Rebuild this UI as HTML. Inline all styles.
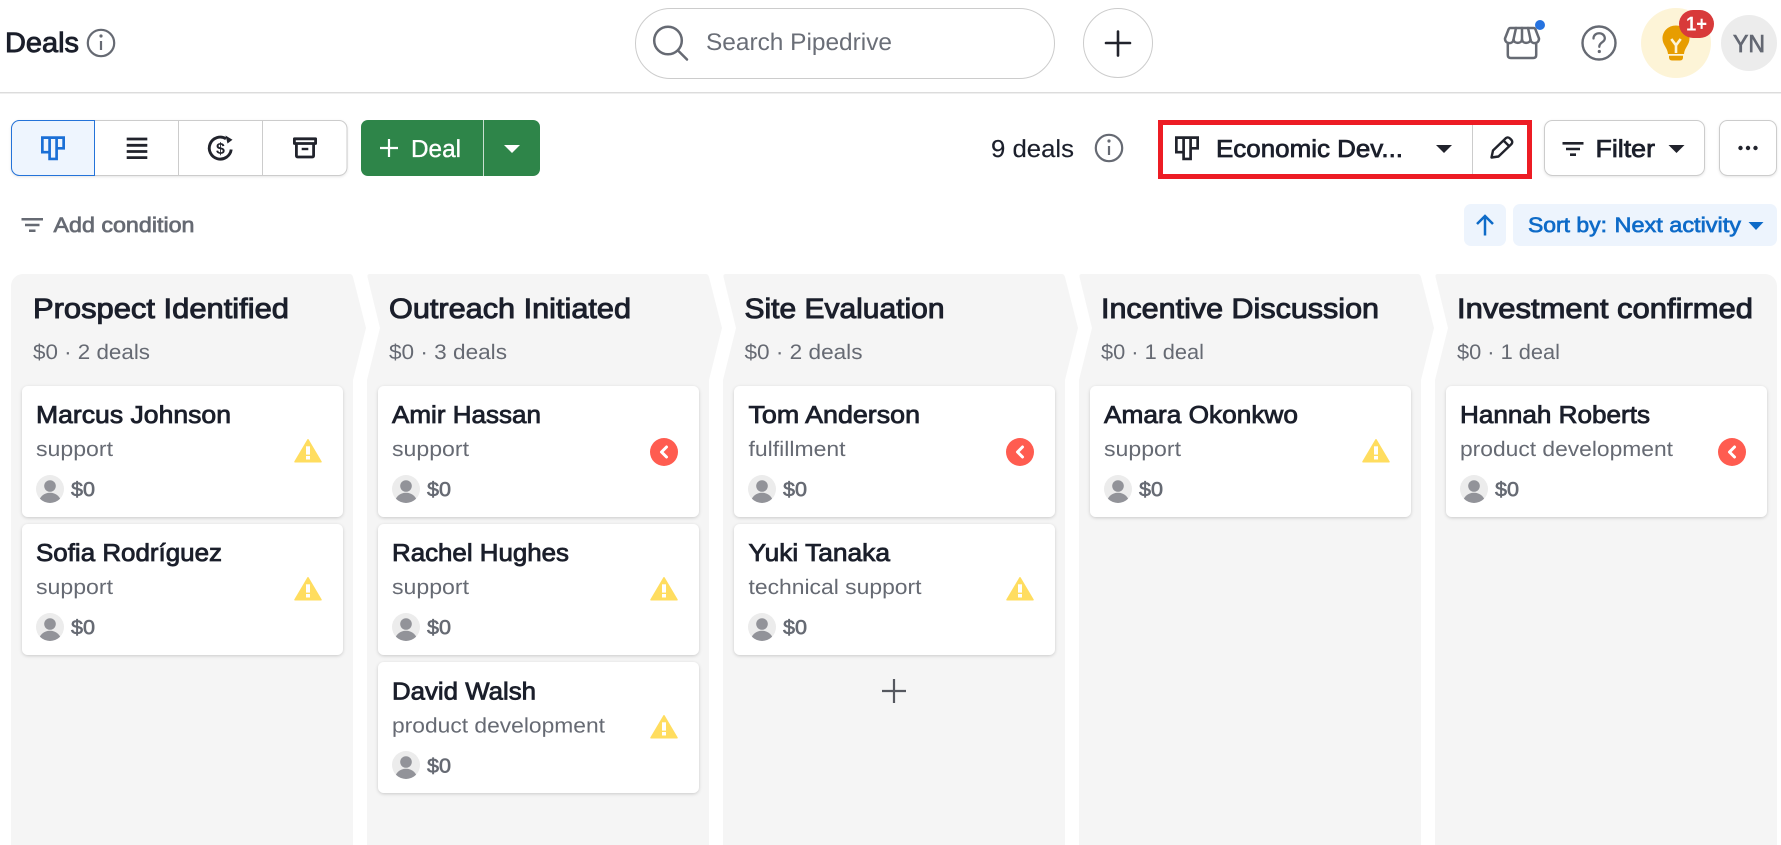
<!DOCTYPE html>
<html lang="en">
<head>
<meta charset="utf-8">
<title>Deals</title>
<style>
html,body{margin:0;padding:0;background:#fff;width:1781px;height:845px;overflow:hidden}
svg{display:block}
text{font-family:"Liberation Sans",Arial,sans-serif;text-rendering:geometricPrecision}
.t{font-size:28px;fill:#1b1f2b;stroke:#1b1f2b;stroke-width:.95px}
.s{font-size:21px;fill:#666a73}
.n{font-size:24.5px;fill:#1b1f2b;stroke:#1b1f2b;stroke-width:.8px}
.v{font-size:20px;fill:#666a73;stroke:#666a73;stroke-width:.6px}
</style>
</head>
<body>
<svg width="1781" height="845" viewBox="0 0 1781 845" xmlns="http://www.w3.org/2000/svg">
<defs>
  <filter id="cs" x="-5%" y="-10%" width="110%" height="125%"><feDropShadow dx="0" dy="1" stdDeviation="1.6" flood-color="#000" flood-opacity=".18"/></filter>
  <filter id="bs" x="-5%" y="-10%" width="110%" height="125%"><feDropShadow dx="0" dy="1" stdDeviation="1.2" flood-color="#000" flood-opacity=".1"/></filter>
  <clipPath id="avc"><circle cx="14" cy="14" r="14"/></clipPath>
  <g id="av"><circle cx="14" cy="14" r="14" fill="#ececec"/><circle cx="14" cy="11" r="5.800" fill="#929399"/><ellipse cx="14" cy="27.500" rx="11" ry="9.800" fill="#929399" clip-path="url(#avc)"/></g>
  <g id="wa"><path d="M14 1.800 27 23.700H1Z" fill="#ffdd5f" stroke="#ffdd5f" stroke-width="1.500" stroke-linejoin="round"/><rect x="12" y="8.300" width="4" height="8.300" fill="#fff"/><rect x="12" y="18" width="4" height="3.500" fill="#fff"/></g>
  <g id="ba"><circle cx="14" cy="14" r="14" fill="#ff5c50"/><path d="M16.500 9 11.500 14 16.500 19" fill="none" stroke="#fff" stroke-width="3" stroke-linecap="round" stroke-linejoin="round"/></g>
  <g id="card">
    <rect width="321" height="131" rx="6" fill="#fff" filter="url(#cs)"/>
    <use href="#av" x="14" y="89"/>
  </g>
  <g id="pl" fill="none" stroke-width="2.700"><path d="M1.350 1.350H22.650V12H15.600V22.650H8.600V15.900H1.350ZM8.600 1.350V15.900M15.600 1.350V12"/></g>
</defs>

<rect width="1781" height="845" fill="#fff"/>

<!-- header -->
<rect y="92" width="1781" height="1" fill="#dcdcdc"/>
<rect y="93" width="1781" height="1" fill="#efefef"/>
<text x="5" y="52" font-size="28" fill="#1b1f2b" stroke="#1b1f2b" stroke-width=".9" textLength="74" lengthAdjust="spacingAndGlyphs">Deals</text>
<g fill="none" stroke="#666a73" stroke-width="2.200"><circle cx="101" cy="43" r="13.200"/><path d="M101 41v9"/></g><circle cx="101" cy="36" r="1.600" fill="#666a73"/>

<rect x="635.500" y="8.500" width="419" height="70" rx="35" fill="#fff" stroke="#ccc"/>
<circle cx="668" cy="40.500" r="13.800" fill="none" stroke="#666a73" stroke-width="2.500"/>
<path d="M678 50.500 687 59.500" stroke="#666a73" stroke-width="2.500" stroke-linecap="round"/>
<text x="706" y="50" font-size="24" fill="#6a6e77" textLength="186" lengthAdjust="spacingAndGlyphs">Search Pipedrive</text>
<circle cx="1118" cy="43" r="34.500" fill="#fff" stroke="#ccc"/>
<path d="M1106 43h24M1118 31.500v24" stroke="#21232c" stroke-width="2.600" stroke-linecap="round"/>

<!-- store -->
<g fill="none" stroke="#666a73" stroke-width="2.500" stroke-linejoin="round" stroke-linecap="round">
  <path d="M1507.800 43V55Q1507.800 58 1510.800 58H1533.200Q1536.200 58 1536.200 55V43"/>
  <path d="M1510.500 28H1533.500Q1535 28 1535.500 29.500L1539 38.500C1539 44.500 1531 44.500 1530.500 39.500C1530 44 1522.500 44 1522 39.500C1521.500 44 1514 44 1513.500 39.500C1513 44.500 1505 44.500 1505 38.500L1508.500 29.500Q1509 28 1510.500 28Z"/>
  <path d="M1513.500 39.500 1516 28M1522 39.500V28M1530.500 39.500 1528 28"/>
</g>
<circle cx="1540" cy="25" r="5" fill="#2673e0"/>
<!-- help -->
<circle cx="1599" cy="43" r="16.500" fill="none" stroke="#666a73" stroke-width="2.400"/>
<path d="M1593.500 38.500C1593.500 31.500 1604.800 31.500 1604.800 38.500C1604.800 42.500 1599.300 42 1599.300 46.800" fill="none" stroke="#666a73" stroke-width="2.300" stroke-linecap="round"/>
<circle cx="1599.300" cy="51.500" r="1.600" fill="#666a73"/>
<!-- bulb -->
<circle cx="1676" cy="43" r="35" fill="#fdf4d7"/>
<path d="M1676 25.500C1684 25.500 1689.500 31.500 1689.500 38.500C1689.500 45 1684.500 47.500 1684 54H1668C1667.500 47.500 1662.500 45 1662.500 38.500C1662.500 31.500 1668 25.500 1676 25.500Z" fill="#e79d00"/>
<path d="M1669 55.800H1683V57.500C1683 59 1682 60.500 1680 60.500H1672C1670 60.500 1669 59 1669 57.500Z" fill="#e79d00"/>
<path d="M1671.300 39 1676 45.300 1680.700 39M1676 45.300V53" fill="none" stroke="#fdf4d7" stroke-width="2.600"/>
<rect x="1679" y="10" width="35" height="28" rx="14" fill="#d83a3a"/>
<text x="1686" y="30.500" font-size="20" font-weight="700" fill="#fff" textLength="21" lengthAdjust="spacingAndGlyphs">1+</text>
<circle cx="1749" cy="43" r="28" fill="#ececec"/>
<text x="1733" y="52" font-size="24.500" fill="#646873" stroke="#646873" stroke-width=".75" textLength="32" lengthAdjust="spacingAndGlyphs">YN</text>

<!-- view toggles -->
<rect x="11.500" y="120.500" width="335.500" height="55" rx="8" fill="#fff" stroke="#ccc" filter="url(#bs)"/>
<path d="M94.500 120.500H19.500A8 8 0 0 0 11.500 128.500V167.500A8 8 0 0 0 19.500 175.500H94.500Z" fill="#eef5fe" stroke="#2473d9"/>
<path d="M178.500 121V175M262.500 121V175" stroke="#ccc"/>
<use href="#pl" x="41" y="136.300" stroke="#1a6fd6"/>
<path d="M126.700 139H147.300M126.700 145.300H147.300M126.700 151.500H147.300M126.700 157.600H147.300" stroke="#21232c" stroke-width="2.800"/>
<path d="M226 138.700A11 11 0 1 0 231.200 149.500" fill="none" stroke="#21232c" stroke-width="2.900"/>
<path d="M225.500 135.500 232.500 139.800 227.500 143.500Z" fill="#21232c"/>
<text x="220.500" y="154" font-size="16" font-weight="700" fill="#21232c" text-anchor="middle">$</text>
<g fill="none" stroke="#21232c" stroke-width="2.800" stroke-linejoin="round"><path d="M294.400 138.800H315.600V143.500H294.400ZM296.400 143.500V155.500Q296.400 157 298 157H312Q313.600 157 313.600 155.500V143.500"/></g>
<path d="M301.700 149H308.300" stroke="#21232c" stroke-width="2.400"/>

<!-- add deal -->
<rect x="361" y="120" width="179" height="56" rx="7" fill="#2e8549"/>
<rect x="483" y="120" width="1" height="56" fill="#c9dfd0"/>
<path d="M380 148H398M389 139V157" stroke="#fff" stroke-width="2.200"/>
<text x="411" y="157" font-size="24.500" fill="#fff" stroke="#fff" stroke-width=".35" textLength="50" lengthAdjust="spacingAndGlyphs">Deal</text>
<path d="M504 145H520L512 153Z" fill="#fff"/>

<!-- right toolbar -->
<text x="991" y="157" font-size="24.500" fill="#1b1f2b" stroke="#1b1f2b" stroke-width=".15" textLength="83" lengthAdjust="spacingAndGlyphs">9 deals</text>
<g fill="none" stroke="#666a73" stroke-width="2.200"><circle cx="1109" cy="148" r="13.200"/><path d="M1109 146v9"/></g><circle cx="1109" cy="141" r="1.600" fill="#666a73"/>

<rect x="1160.500" y="122.500" width="369" height="54" fill="#fff" stroke="#ed1c24" stroke-width="5"/>
<rect x="1472" y="125" width="1" height="49" fill="#ccc"/>
<use href="#pl" x="1175" y="136.300" stroke="#21232c"/>
<text x="1216" y="157" font-size="24.500" fill="#1b1f2b" stroke="#1b1f2b" stroke-width=".75" textLength="187" lengthAdjust="spacingAndGlyphs">Economic Dev...</text>
<path d="M1436 145H1452L1444 153Z" fill="#21232c"/>
<path d="M1491.500 157.500 1493 150.500 1506 138Q1508 136.700 1510 138.500L1511.500 140Q1513 142 1511.500 144L1498.500 156.500ZM1503.500 140.500 1509 146" fill="none" stroke="#21232c" stroke-width="2.400" stroke-linejoin="round"/>

<rect x="1544.500" y="120.500" width="160" height="55" rx="8" fill="#fff" stroke="#ccc" filter="url(#bs)"/>
<path d="M1562.500 143.300H1583.500M1566 149H1580M1570 154.700H1576" stroke="#21232c" stroke-width="2.600"/>
<text x="1595.500" y="157" font-size="24.500" fill="#1b1f2b" stroke="#1b1f2b" stroke-width=".75" textLength="59.500" lengthAdjust="spacingAndGlyphs">Filter</text>
<path d="M1668.500 145H1684.500L1676.500 153Z" fill="#21232c"/>
<rect x="1719.500" y="120.500" width="57" height="55" rx="8" fill="#fff" stroke="#ccc" filter="url(#bs)"/>
<circle cx="1740.500" cy="148" r="2.200" fill="#21232c"/><circle cx="1748" cy="148" r="2.200" fill="#21232c"/><circle cx="1755.500" cy="148" r="2.200" fill="#21232c"/>

<!-- condition row -->
<path d="M21.500 219.300H43M25 225H39.500M29 230.700H35.500" stroke="#666a73" stroke-width="2.500"/>
<text x="53.500" y="232" font-size="21" fill="#666a73" stroke="#666a73" stroke-width=".7" textLength="141" lengthAdjust="spacingAndGlyphs">Add condition</text>
<rect x="1464" y="204" width="42" height="42" rx="7" fill="#edf4fd"/>
<path d="M1485 235.500V216M1477 224 1485 216 1493 224" fill="none" stroke="#0e6bc8" stroke-width="2.500"/>
<rect x="1513" y="204" width="264" height="42" rx="7" fill="#edf4fd"/>
<text x="1528" y="232" font-size="21" fill="#0e6bc8" stroke="#0e6bc8" stroke-width=".7" textLength="79" lengthAdjust="spacingAndGlyphs">Sort by:</text>
<text x="1614.500" y="232" font-size="21" fill="#0e6bc8" stroke="#0e6bc8" stroke-width=".7" textLength="126.500" lengthAdjust="spacingAndGlyphs">Next activity</text>
<path d="M1748.500 222H1763.500L1756 230Z" fill="#0e6bc8"/>

<!-- columns -->
<g fill="#f5f5f5">
  <path d="M11 845V286A12 12 0 0 1 23 274H350Q352 274 353 277L366 328 353 380V845Z"/>
  <path d="M367 845V380L380 328 367.500 277Q367 274 370 274H706Q708 274 709 277L722 328 709 380V845Z"/>
  <path d="M723 845V380L736 328 723.500 277Q723 274 726 274H1062Q1064 274 1065 277L1078 328 1065 380V845Z"/>
  <path d="M1079 845V380L1092 328 1079.500 277Q1079 274 1082 274H1418Q1420 274 1421 277L1434 328 1421 380V845Z"/>
  <path d="M1435 845V380L1448 328 1435.500 277Q1435 274 1438 274H1765A12 12 0 0 1 1777 286V845Z"/>
</g>

<text class="t" x="33" y="318" textLength="256" lengthAdjust="spacingAndGlyphs">Prospect Identified</text>
<text class="s" x="33" y="359" textLength="117" lengthAdjust="spacingAndGlyphs">$0 · 2 deals</text>
<text class="t" x="389" y="318" textLength="242" lengthAdjust="spacingAndGlyphs">Outreach Initiated</text>
<text class="s" x="389" y="359" textLength="118" lengthAdjust="spacingAndGlyphs">$0 · 3 deals</text>
<text class="t" x="744.500" y="318" textLength="200" lengthAdjust="spacingAndGlyphs">Site Evaluation</text>
<text class="s" x="744.500" y="359" textLength="118" lengthAdjust="spacingAndGlyphs">$0 · 2 deals</text>
<text class="t" x="1101" y="318" textLength="278" lengthAdjust="spacingAndGlyphs">Incentive Discussion</text>
<text class="s" x="1101" y="359" textLength="103" lengthAdjust="spacingAndGlyphs">$0 · 1 deal</text>
<text class="t" x="1457" y="318" textLength="296" lengthAdjust="spacingAndGlyphs">Investment confirmed</text>
<text class="s" x="1457" y="359" textLength="103" lengthAdjust="spacingAndGlyphs">$0 · 1 deal</text>

<!-- col 1 -->
<g transform="translate(22 386)"><use href="#card"/><use href="#wa" x="272" y="52"/>
  <text class="n" x="14" y="37" textLength="195" lengthAdjust="spacingAndGlyphs">Marcus Johnson</text>
  <text class="s" x="14" y="70" textLength="77" lengthAdjust="spacingAndGlyphs">support</text>
  <text class="v" x="49" y="110" textLength="24" lengthAdjust="spacingAndGlyphs">$0</text></g>
<g transform="translate(22 524)"><use href="#card"/><use href="#wa" x="272" y="52"/>
  <text class="n" x="14" y="37" textLength="186" lengthAdjust="spacingAndGlyphs">Sofia Rodríguez</text>
  <text class="s" x="14" y="70" textLength="77" lengthAdjust="spacingAndGlyphs">support</text>
  <text class="v" x="49" y="110" textLength="24" lengthAdjust="spacingAndGlyphs">$0</text></g>

<!-- col 2 -->
<g transform="translate(378 386)"><use href="#card"/><use href="#ba" x="272" y="52"/>
  <text class="n" x="14" y="37" textLength="149" lengthAdjust="spacingAndGlyphs">Amir Hassan</text>
  <text class="s" x="14" y="70" textLength="77" lengthAdjust="spacingAndGlyphs">support</text>
  <text class="v" x="49" y="110" textLength="24" lengthAdjust="spacingAndGlyphs">$0</text></g>
<g transform="translate(378 524)"><use href="#card"/><use href="#wa" x="272" y="52"/>
  <text class="n" x="14" y="37" textLength="177" lengthAdjust="spacingAndGlyphs">Rachel Hughes</text>
  <text class="s" x="14" y="70" textLength="77" lengthAdjust="spacingAndGlyphs">support</text>
  <text class="v" x="49" y="110" textLength="24" lengthAdjust="spacingAndGlyphs">$0</text></g>
<g transform="translate(378 662)"><use href="#card"/><use href="#wa" x="272" y="52"/>
  <text class="n" x="14" y="37.500" textLength="144" lengthAdjust="spacingAndGlyphs">David Walsh</text>
  <text class="s" x="14" y="70.500" textLength="213" lengthAdjust="spacingAndGlyphs">product development</text>
  <text class="v" x="49" y="110.500" textLength="24" lengthAdjust="spacingAndGlyphs">$0</text></g>

<!-- col 3 -->
<g transform="translate(734 386)"><use href="#card"/><use href="#ba" x="272" y="52"/>
  <text class="n" x="14.500" y="37" textLength="171.500" lengthAdjust="spacingAndGlyphs">Tom Anderson</text>
  <text class="s" x="14.500" y="70" textLength="97" lengthAdjust="spacingAndGlyphs">fulfillment</text>
  <text class="v" x="49" y="110" textLength="24" lengthAdjust="spacingAndGlyphs">$0</text></g>
<g transform="translate(734 524)"><use href="#card"/><use href="#wa" x="272" y="52"/>
  <text class="n" x="14.500" y="37" textLength="141.500" lengthAdjust="spacingAndGlyphs">Yuki Tanaka</text>
  <text class="s" x="14.500" y="70" textLength="173" lengthAdjust="spacingAndGlyphs">technical support</text>
  <text class="v" x="49" y="110" textLength="24" lengthAdjust="spacingAndGlyphs">$0</text></g>
<path d="M882 691H906M894 679V703" stroke="#55585f" stroke-width="2.200"/>

<!-- col 4 -->
<g transform="translate(1090 386)"><use href="#card"/><use href="#wa" x="272" y="52"/>
  <text class="n" x="14" y="37" textLength="194" lengthAdjust="spacingAndGlyphs">Amara Okonkwo</text>
  <text class="s" x="14" y="70" textLength="77" lengthAdjust="spacingAndGlyphs">support</text>
  <text class="v" x="49" y="110" textLength="24" lengthAdjust="spacingAndGlyphs">$0</text></g>

<!-- col 5 -->
<g transform="translate(1446 386)"><use href="#card"/><use href="#ba" x="272" y="52"/>
  <text class="n" x="14" y="37" textLength="190" lengthAdjust="spacingAndGlyphs">Hannah Roberts</text>
  <text class="s" x="14" y="70" textLength="213" lengthAdjust="spacingAndGlyphs">product development</text>
  <text class="v" x="49" y="110" textLength="24" lengthAdjust="spacingAndGlyphs">$0</text></g>
</svg>
</body>
</html>
